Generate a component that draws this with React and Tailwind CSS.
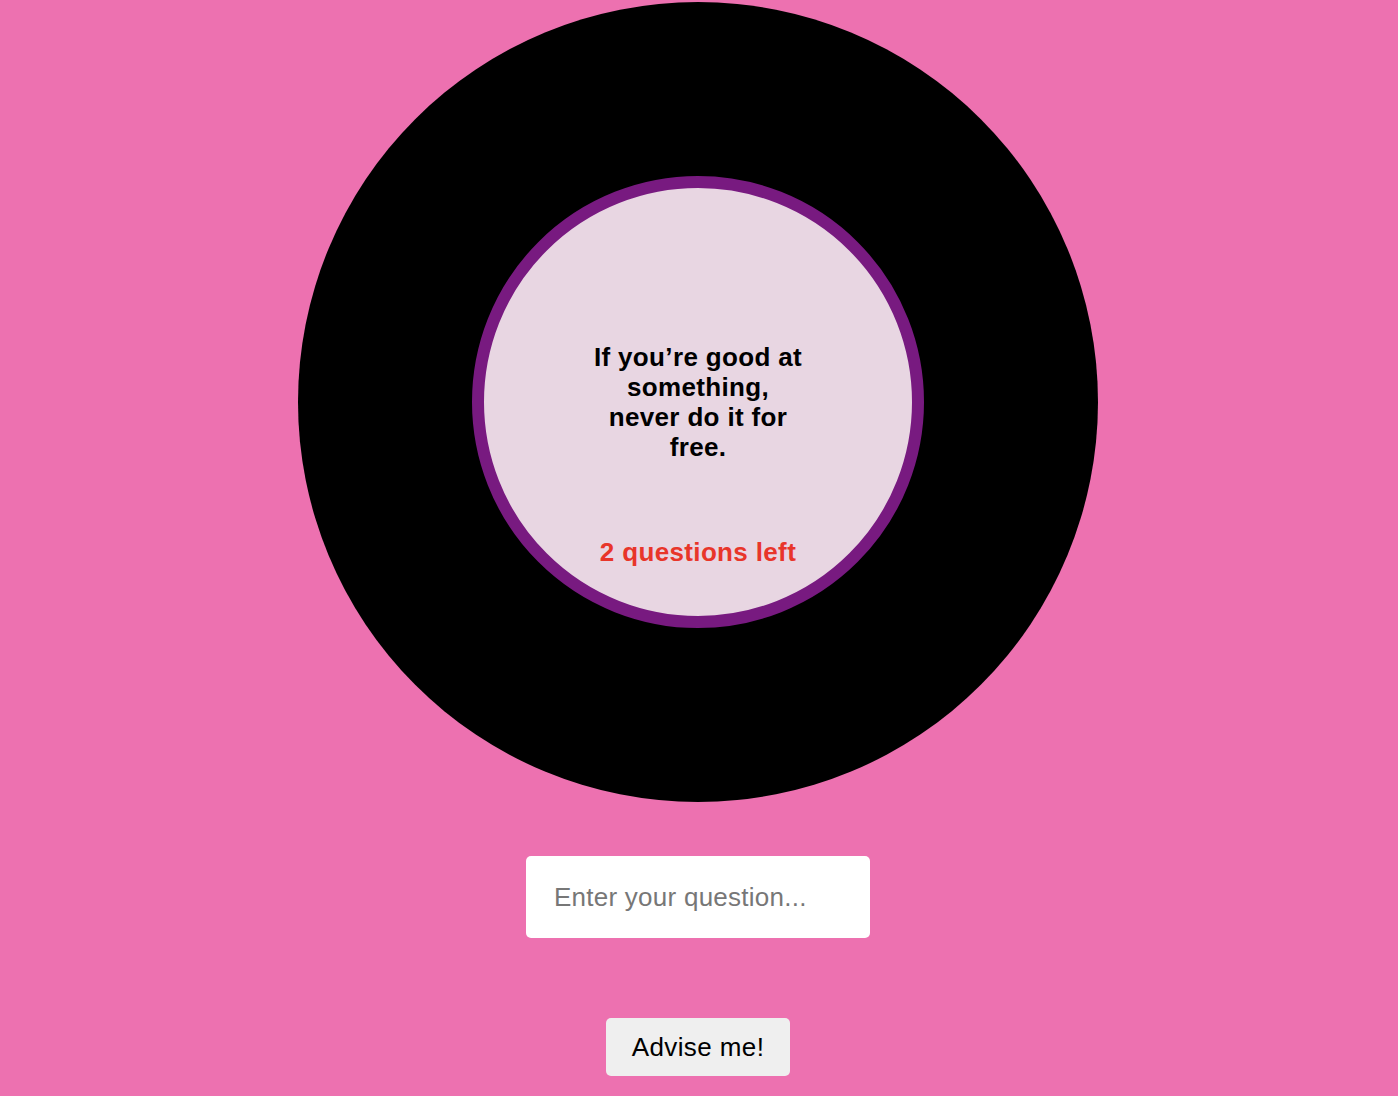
import React from "react";

export default function App() {
  return (
    <div
      className="min-h-screen w-full bg-[#ed71b0] flex flex-col items-center pt-[2px] pb-[20px] pr-[2px]"
      style={{ fontFamily: '"Liberation Sans", Arial, Helvetica, sans-serif' }}
    >
      <div className="w-[800px] h-[800px] shrink-0 rounded-full bg-black flex items-center justify-center">
        <div className="w-[452px] h-[452px] rounded-full border-[12px] border-[#781a80] bg-[#e8d6e2] flex flex-col items-center pt-[154px]">
          <p className="w-[216px] text-center text-[26px] font-bold text-black leading-[30px] tracking-[0.35px]">
            If you’re good at something, never do it for free.
          </p>
          <p className="mt-[75px] text-center text-[26px] font-bold text-[#e8352a] leading-[30px] tracking-[0.35px]">
            2 questions left
          </p>
        </div>
      </div>
      <input
        type="text"
        placeholder="Enter your question..."
        className="mt-[54px] w-[344px] h-[82px] rounded-[5px] bg-white pl-[28px] pr-[20px] text-[26px] tracking-[0.25px] text-black placeholder:text-[#777777] outline-none border-0"
      />
      <button className="mt-[80px] w-[184px] h-[58px] rounded-[5px] bg-[#efefef] text-[26px] tracking-[0.4px] text-black">
        Advise me!
      </button>
    </div>
  );
}
